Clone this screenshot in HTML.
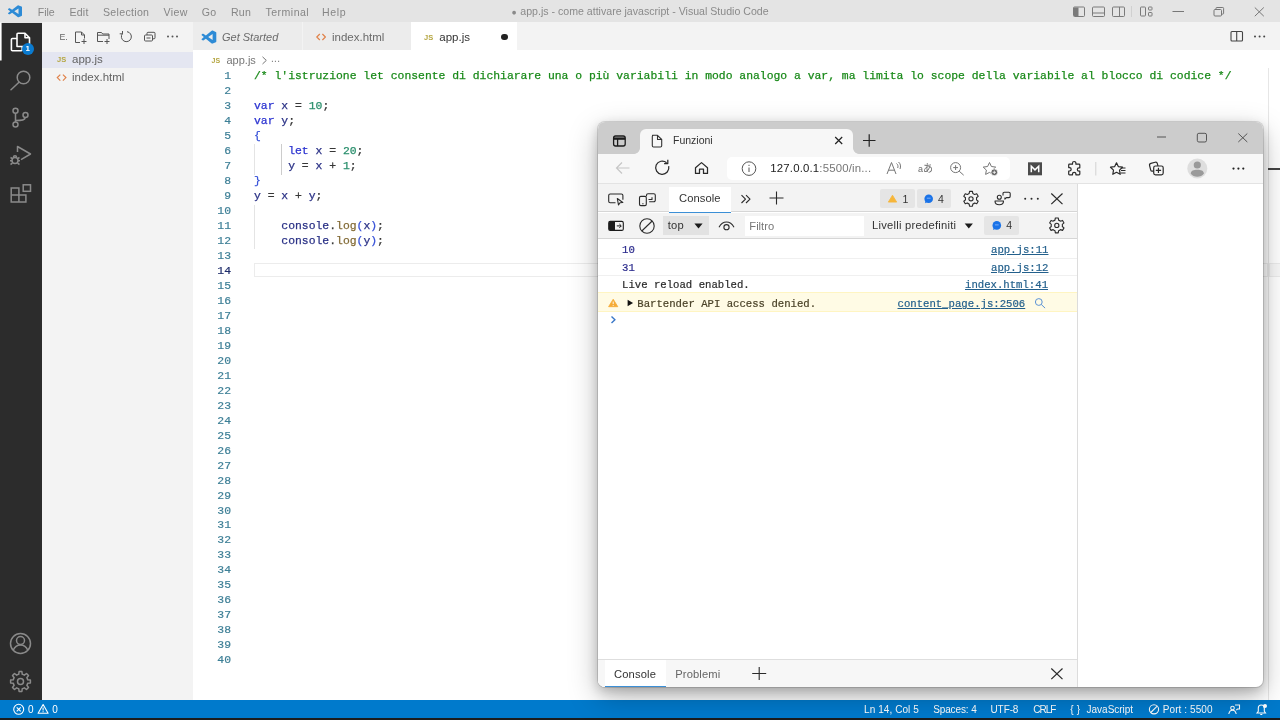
<!DOCTYPE html>
<html lang="it">
<head>
<meta charset="utf-8">
<title>app.js - come attivare javascript - Visual Studio Code</title>
<style>
*{box-sizing:border-box;margin:0;padding:0}
html,body{width:1280px;height:720px;overflow:hidden;background:#fff;font-family:"Liberation Sans",sans-serif;}
.abs,.t{position:absolute;white-space:pre;}
.t{line-height:1;}
svg{position:absolute;overflow:visible}
/* VS Code */
#titlebar{left:0;top:0;width:1280px;height:22.5px;background:#e4e4e4;}
#activity{left:0;top:22.5px;width:42px;height:677.5px;background:#2c2c2c;}
#sidebar{left:42px;top:22px;width:151px;height:678px;background:#f3f3f3;}
#tabs{left:193px;top:22px;width:1087px;height:28px;background:#f3f3f3;}
#editor{left:193px;top:50px;width:1087px;height:650px;background:#fff;}
#status{left:0;top:700px;width:1280px;height:17.500px;background:#007acc;}
#taskbar{left:0;top:717.500px;width:1280px;height:2.500px;background:#1c1c1c;}
.menu{top:6.5px;font-size:10.6px;color:#868686;}
.ln,.cl{position:absolute;white-space:pre;font-family:"Liberation Mono",monospace;font-size:11.4px;line-height:15px;height:15px;-webkit-text-stroke:0.250px currentColor;}
.ln{left:193px;width:38px;text-align:right;color:#3d7f96;-webkit-text-stroke:0.200px currentColor;}
.cl{left:254px;color:#383838;}
.cm{color:#1a8a1a}.kw{color:#2a32d0}.v{color:#2a3186}.n{color:#2a8f6c}.f{color:#846c38}.b1{color:#3550d8}
.sb{top:704.500px;font-size:10px;color:#fff;}
/* Browser */
#bwin{left:598px;top:122px;width:665px;height:565px;border-radius:7px;background:#fff;box-shadow:0 0 0 1px rgba(0,0,0,.13),0 10px 30px rgba(0,0,0,.26),0 4px 12px rgba(0,0,0,.20);overflow:hidden;}
.lk{color:#23608c;text-decoration:underline;text-underline-offset:1px}
.con{font-family:"Liberation Mono",monospace;font-size:10.650px;-webkit-text-stroke:0.200px currentColor;}
</style>
</head>
<body style="filter:blur(0.45px)">
<!-- ===== VS Code window ===== -->
<div class="abs" id="titlebar"></div>
<div class="abs" id="activity"></div>
<div class="abs" id="sidebar"></div>
<div class="abs" id="tabs"></div>
<div class="abs" id="editor"></div>
<div class="abs" id="status"></div>
<div class="abs" id="taskbar"></div>

<!-- title bar text -->
<span class="t menu" style="left:37.8px;letter-spacing:-0.05px">File</span>
<span class="t menu" style="left:69.5px;letter-spacing:0.2px">Edit</span>
<span class="t menu" style="left:103px;letter-spacing:0.3px">Selection</span>
<span class="t menu" style="left:163.500px;letter-spacing:0.4px">View</span>
<span class="t menu" style="left:201.8px;letter-spacing:0.2px">Go</span>
<span class="t menu" style="left:231px;letter-spacing:0.2px">Run</span>
<span class="t menu" style="left:265.500px;letter-spacing:0.45px">Terminal</span>
<span class="t menu" style="left:322px;letter-spacing:0.6px">Help</span>
<span class="t" id="wtitle" style="left:511.500px;top:6.300px;font-size:10.6px;color:#8a8a8a;"><span style="font-size:8.500px;position:relative;top:-0.600px;letter-spacing:0.700px">●</span> app.js - come attivare javascript - Visual Studio Code</span>

<!-- sidebar -->
<div class="abs" style="left:42px;top:52px;width:151px;height:16px;background:#e4e6f1"></div>
<span class="t" style="left:57px;top:56px;font-size:7.5px;font-weight:bold;color:#b5a642">JS</span>
<span class="t" style="left:72px;top:54.300px;font-size:11.5px;color:#636363">app.js</span>
<span class="t" style="left:72px;top:72px;font-size:11.5px;color:#636363">index.html</span>
<span class="t" style="left:59.500px;top:33px;font-size:8.800px;color:#666">E.</span>

<!-- tabs -->
<div class="abs" style="left:193px;top:22px;width:108.500px;height:28px;background:#ececec"></div>
<div class="abs" style="left:302.500px;top:22px;width:108.500px;height:28px;background:#ececec"></div>
<div class="abs" style="left:411px;top:22px;width:106.300px;height:28px;background:#fff"></div>
<span class="t" style="left:222px;top:32px;font-size:11px;font-style:italic;color:#6a6a6a">Get Started</span>
<span class="t" style="left:332px;top:32px;font-size:11.5px;color:#6a6a6a">index.html</span>
<span class="t" style="left:424px;top:34px;font-size:7.5px;font-weight:bold;color:#b5a642">JS</span>
<span class="t" style="left:439.300px;top:32px;font-size:11.5px;color:#333">app.js</span>
<div class="abs" style="left:501.200px;top:33.500px;width:6.500px;height:6.500px;border-radius:50%;background:#222"></div>

<!-- breadcrumb -->
<span class="t" style="left:211.500px;top:57px;font-size:7px;font-weight:bold;color:#b5a642">JS</span>
<span class="t" style="left:226.500px;top:55px;font-size:11px;color:#777">app.js</span>
<span class="t" style="left:271px;top:54px;font-size:10px;letter-spacing:0.3px;color:#777">...</span>

<!-- current line highlight -->
<div class="abs" style="left:253.500px;top:263.300px;width:1014px;height:13.700px;border:1.500px solid #ececec"></div>
<div class="abs" style="left:1267.500px;top:68px;width:1px;height:632px;background:#e6e6e6"></div>
<div class="abs" style="left:1268.500px;top:263.300px;width:12px;height:13.700px;border:1.500px solid #ececec;border-right:0;background:#f8f8f8"></div>
<div class="abs" style="left:1268px;top:168px;width:12px;height:2px;background:#444"></div>
<!-- indent guides -->
<div class="abs" style="left:253.600px;top:144px;width:1px;height:30.500px;background:#e4e4e4"></div>
<div class="abs" style="left:280.700px;top:144px;width:1px;height:30.500px;background:#cccccc"></div>
<div class="abs" style="left:253.600px;top:205px;width:1px;height:43.500px;background:#e4e4e4"></div>
<!-- code -->
<div class="ln" style="top:69px">1</div><div class="cl" style="top:69px"><span class="cm">/* l'istruzione let consente di dichiarare una o più variabili in modo analogo a var, ma limita lo scope della variabile al blocco di codice */</span></div>
<div class="ln" style="top:84px">2</div><div class="cl" style="top:84px"></div>
<div class="ln" style="top:99px">3</div><div class="cl" style="top:99px"><span class="kw">var</span> <span class="v">x</span> = <span class="n">10</span>;</div>
<div class="ln" style="top:114px">4</div><div class="cl" style="top:114px"><span class="kw">var</span> <span class="v">y</span>;</div>
<div class="ln" style="top:129px">5</div><div class="cl" style="top:129px"><span class="b1">{</span></div>
<div class="ln" style="top:144px">6</div><div class="cl" style="top:144px">     <span class="kw">let</span> <span class="v">x</span> = <span class="n">20</span>;</div>
<div class="ln" style="top:159px">7</div><div class="cl" style="top:159px">     <span class="v">y</span> = <span class="v">x</span> + <span class="n">1</span>;</div>
<div class="ln" style="top:174px">8</div><div class="cl" style="top:174px"><span class="b1">}</span></div>
<div class="ln" style="top:189px">9</div><div class="cl" style="top:189px"><span class="v">y</span> = <span class="v">x</span> + <span class="v">y</span>;</div>
<div class="ln" style="top:204px">10</div><div class="cl" style="top:204px"></div>
<div class="ln" style="top:219px">11</div><div class="cl" style="top:219px">    <span class="v">console</span>.<span class="f">log</span><span class="b1">(</span><span class="v">x</span><span class="b1">)</span>;</div>
<div class="ln" style="top:234px">12</div><div class="cl" style="top:234px">    <span class="v">console</span>.<span class="f">log</span><span class="b1">(</span><span class="v">y</span><span class="b1">)</span>;</div>
<div class="ln" style="top:249px">13</div><div class="cl" style="top:249px"></div>
<div class="ln" style="top:264px;color:#1f2d6b">14</div><div class="cl" style="top:264px"></div>
<div class="ln" style="top:279px">15</div><div class="cl" style="top:279px"></div>
<div class="ln" style="top:294px">16</div><div class="cl" style="top:294px"></div>
<div class="ln" style="top:309px">17</div><div class="cl" style="top:309px"></div>
<div class="ln" style="top:324px">18</div><div class="cl" style="top:324px"></div>
<div class="ln" style="top:339px">19</div><div class="cl" style="top:339px"></div>
<div class="ln" style="top:354px">20</div><div class="cl" style="top:354px"></div>
<div class="ln" style="top:369px">21</div><div class="cl" style="top:369px"></div>
<div class="ln" style="top:384px">22</div><div class="cl" style="top:384px"></div>
<div class="ln" style="top:399px">23</div><div class="cl" style="top:399px"></div>
<div class="ln" style="top:414px">24</div><div class="cl" style="top:414px"></div>
<div class="ln" style="top:429px">25</div><div class="cl" style="top:429px"></div>
<div class="ln" style="top:444px">26</div><div class="cl" style="top:444px"></div>
<div class="ln" style="top:459px">27</div><div class="cl" style="top:459px"></div>
<div class="ln" style="top:474px">28</div><div class="cl" style="top:474px"></div>
<div class="ln" style="top:489px">29</div><div class="cl" style="top:489px"></div>
<div class="ln" style="top:504px">30</div><div class="cl" style="top:504px"></div>
<div class="ln" style="top:518px">31</div><div class="cl" style="top:518px"></div>
<div class="ln" style="top:533px">32</div><div class="cl" style="top:533px"></div>
<div class="ln" style="top:548px">33</div><div class="cl" style="top:548px"></div>
<div class="ln" style="top:563px">34</div><div class="cl" style="top:563px"></div>
<div class="ln" style="top:578px">35</div><div class="cl" style="top:578px"></div>
<div class="ln" style="top:593px">36</div><div class="cl" style="top:593px"></div>
<div class="ln" style="top:608px">37</div><div class="cl" style="top:608px"></div>
<div class="ln" style="top:623px">38</div><div class="cl" style="top:623px"></div>
<div class="ln" style="top:638px">39</div><div class="cl" style="top:638px"></div>
<div class="ln" style="top:653px">40</div><div class="cl" style="top:653px"></div>
<!-- ===== VS Code icons ===== -->
<svg width="1280" height="720" style="left:0;top:0" viewBox="0 0 1280 720" fill="none">
<!-- logo in title bar -->
<path d="M70.9119 99.3171C72.4869 99.9307 74.2828 99.8914 75.8725 99.1264L96.4608 89.2197C98.6242 88.1787 100 85.9892 100 83.5872V16.4133C100 14.0113 98.6243 11.8218 96.4609 10.7808L75.8725 0.873756C73.7862 -0.130129 71.3446 0.11576 69.5135 1.44695C69.252 1.63711 69.0028 1.84943 68.769 2.08341L29.3551 38.0415L12.1872 25.0096C10.589 23.7965 8.35363 23.8959 6.86933 25.2461L1.36303 30.2549C-0.452552 31.9064 -0.454633 34.7627 1.35853 36.417L16.2471 50.0001L1.35853 63.5832C-0.454633 65.2374 -0.452552 68.0938 1.36303 69.7453L6.86933 74.7541C8.35363 76.1043 10.589 76.2037 12.1872 74.9905L29.3551 61.9587L68.769 97.9167C69.3925 98.5406 70.1246 99.0104 70.9119 99.3171ZM75.0152 27.2989L45.1091 50.0001L75.0152 72.7012V27.2989Z" transform="translate(8,5.3) scale(0.14,0.12)" fill="#2d8bd6" fill-rule="evenodd"/>
<!-- logo in Get Started tab -->
<path d="M70.9119 99.3171C72.4869 99.9307 74.2828 99.8914 75.8725 99.1264L96.4608 89.2197C98.6242 88.1787 100 85.9892 100 83.5872V16.4133C100 14.0113 98.6243 11.8218 96.4609 10.7808L75.8725 0.873756C73.7862 -0.130129 71.3446 0.11576 69.5135 1.44695C69.252 1.63711 69.0028 1.84943 68.769 2.08341L29.3551 38.0415L12.1872 25.0096C10.589 23.7965 8.35363 23.8959 6.86933 25.2461L1.36303 30.2549C-0.452552 31.9064 -0.454633 34.7627 1.35853 36.417L16.2471 50.0001L1.35853 63.5832C-0.454633 65.2374 -0.452552 68.0938 1.36303 69.7453L6.86933 74.7541C8.35363 76.1043 10.589 76.2037 12.1872 74.9905L29.3551 61.9587L68.769 97.9167C69.3925 98.5406 70.1246 99.0104 70.9119 99.3171ZM75.0152 27.2989L45.1091 50.0001L75.0152 72.7012V27.2989Z" transform="translate(201.500,30.500) scale(0.148,0.132)" fill="#2d8bd6" fill-rule="evenodd"/>

<!-- title bar layout controls -->
<g stroke="#7a7a7a" stroke-width="1">
 <rect x="1073.5" y="7" width="11" height="9.5" rx="1"/>
 <rect x="1074" y="7.5" width="4.5" height="8.5" fill="#7a7a7a" stroke="none"/>
 <rect x="1092.5" y="7" width="12" height="9.5" rx="1"/>
 <path d="M1092.5 13h12"/>
 <rect x="1112.5" y="7" width="12" height="9.5" rx="1"/>
 <path d="M1119.5 7v9.5"/>
 <rect x="1140.5" y="7" width="5" height="9" rx="0.8"/>
 <rect x="1148.5" y="7" width="3.5" height="3" rx="0.6"/>
 <rect x="1148.5" y="12.5" width="3.5" height="3.5" rx="0.6"/>
</g>
<path d="M1131.5 6v11" stroke="#d0d0d0" stroke-width="1"/>
<g stroke="#777" stroke-width="1">
 <path d="M1172.5 11.5h11.5"/>
 <rect x="1214" y="9.5" width="7.5" height="6.5" rx="1"/>
 <path d="M1216 9.5v-1.2a.8.8 0 0 1 .8-.8h6a.8.8 0 0 1 .8.8v5a.8.8 0 0 1-.8.8h-1.2"/>
 <path d="M1254.8 7.5l9 8.7M1263.8 7.5l-9 8.7"/>
</g>
<!-- editor actions -->
<g stroke="#444" stroke-width="1.1">
 <rect x="1231" y="31.5" width="11.5" height="9.5" rx="1"/>
 <path d="M1236.7 31.5v9.5"/>
</g>
<g fill="#444"><circle cx="1255" cy="36.5" r="1"/><circle cx="1259.6" cy="36.5" r="1"/><circle cx="1264.2" cy="36.5" r="1"/></g>

<!-- activity bar -->
<rect x="0" y="22.5" width="1.6" height="38" fill="#fff"/>
<g stroke="#fff" stroke-width="1.6" stroke-linejoin="round">
 <path d="M17 46.5V34.3a1 1 0 0 1 1-1h7l4.5 4.5v7.7a1 1 0 0 1-1 1z"/>
 <path d="M25 33.3v4.5h4.5"/>
 <path d="M17 38.5h-4.6a1 1 0 0 0-1 1v10.2a1 1 0 0 0 1 1h8.8a1 1 0 0 0 1-1v-3.2"/>
</g>
<circle cx="28" cy="49" r="6" fill="#0a7bd0"/>
<g stroke="#8a8a8a" stroke-width="1.5">
 <circle cx="23.5" cy="77.5" r="6.3"/>
 <path d="M19 82.200000000000003l-8 7.5" stroke-linecap="round"/>
 <!-- source control -->
 <circle cx="15.5" cy="110.8" r="2.5"/><circle cx="25.5" cy="115" r="2.5"/><circle cx="15.5" cy="124.5" r="2.5"/>
 <path d="M15.5 113.3v8.7M25.2 117.5c0 2.5-3 3-9.7 3"/>
 <!-- run & debug -->
 <path d="M17.5 152v-5.5l13 7.5-9.5 5.600000000000001" stroke-linejoin="round"/>
 <circle cx="15" cy="160.5" r="3" />
 <path d="M10.5 157.5l2 1.2M19.5 157.5l-2 1.2M10 160.8h2M18 160.8h2M10.5 164.5l2-1.3M19.5 164.5l-2-1.3M13.5 157.2c0-2 3-2 3 0"/>
 <!-- extensions -->
 <path d="M11.2 188h7.7v7h7v7h-14.7zM18.900000000000002 195v7M11.2 195h7.7"/>
 <rect x="23.200000000000003" y="184.8" width="7.3" height="6.5"/>
 <!-- account -->
 <circle cx="20.5" cy="643.5" r="10"/>
 <circle cx="20.5" cy="640.5" r="4"/>
 <path d="M13.2 650.3c1.5-3.7 4-5.300000000000001 7.3-5.300000000000001s5.800000000000001 1.6 7.3 5.300000000000001"/>
</g>
<!-- gear -->
<path d="M22.29 674.32L21.89 671.60L19.11 671.60L18.71 674.32A7.4 7.4 0 0 0 16.69 675.16L14.48 673.51L12.51 675.48L14.16 677.69A7.4 7.4 0 0 0 13.32 679.71L10.60 680.11L10.60 682.89L13.32 683.29A7.4 7.4 0 0 0 14.16 685.31L12.51 687.52L14.48 689.49L16.69 687.84A7.4 7.4 0 0 0 18.71 688.68L19.11 691.40L21.89 691.40L22.29 688.68A7.4 7.4 0 0 0 24.31 687.84L26.52 689.49L28.49 687.52L26.84 685.31A7.4 7.4 0 0 0 27.68 683.29L30.40 682.89L30.40 680.11L27.68 679.71A7.4 7.4 0 0 0 26.84 677.69L28.49 675.48L26.52 673.51L24.31 675.16A7.4 7.4 0 0 0 22.29 674.32Z" stroke="#8a8a8a" stroke-width="1.5" stroke-linejoin="round"/>
<circle cx="20.500" cy="681.500" r="3" stroke="#8a8a8a" stroke-width="1.5"/>

<path d="M262.500 56.800l3.800 3.600-3.800 3.600" stroke="#777" stroke-width="1"/>
<path d="M60.300 74.600l-3 3 3 3M62.900 74.600l3 3-3 3M319.800 34l-3 3 3 3M322.400 34l3 3-3 3" stroke="#e0824a" stroke-width="1.200"/>
<!-- sidebar toolbar -->
<g stroke="#555" stroke-width="1">
 <path d="M80 42.5h-4.5v-10.5h6l3 3v3.5M81.5 32v3h3M81.5 41.5h5M84 39v5"/>
 <path d="M103 41.5h-5.5v-9h4l1.2 1.5h6.3v5M97.5 35.200000000000003h11.5M104.5 41.5h5M107 39v5"/>
 <path d="M122.5 33.5a5 5 0 1 0 4.5-1.8M122.5 31v2.8h-2.8"/>
 <rect x="144.5" y="35" width="8" height="6" rx="1"/>
 <path d="M147 35v-1.700000000000003a1 1 0 0 1 1-1h6a1 1 0 0 1 1 1v4.5a1 1 0 0 1-1 1h-1.5M146.5 38h4"/>
</g>
<g fill="#555"><circle cx="168" cy="36.5" r="1"/><circle cx="172.5" cy="36.5" r="1"/><circle cx="177" cy="36.5" r="1"/></g>

<!-- status bar icons -->
<g stroke="#fff" stroke-width="1.1">
 <circle cx="18.700" cy="709.300" r="5"/>
 <path d="M16.700 707.300l4 4M20.700 707.300l-4 4"/>
 <path d="M43.100 704.500l5 8.700h-10z" stroke-linejoin="round"/>
 <path d="M43.100 707.500v3M43.100 711.300v.9"/>
 <circle cx="1154" cy="709.300" r="4.600"/>
 <path d="M1150.800 712.500l6.400-6.400"/>
 <!-- feedback -->
 <circle cx="1232.500" cy="708" r="1.800"/>
 <path d="M1228.800 714c.5-3 2-3.800 3.700-3.800s3.200.8 3.700 3.800M1235 705h4.500v4h-2l-1.200 1.200"/>
 <!-- bell -->
 <path d="M1257 713h8.500l-1.200-1.800v-3.200a3 3 0 0 0-6 0v3.200zM1260.300 714.500h2"/>
</g>
<circle cx="1265" cy="706" r="2" fill="#fff"/>
</svg>
<span class="t" style="left:25.5px;top:44.5px;font-size:8px;font-weight:bold;color:#fff">1</span>

<!-- status bar -->
<span class="t sb" style="left:28px">0</span>
<span class="t sb" style="left:52.3px">0</span>
<span class="t sb" style="left:864px;letter-spacing:0.080px">Ln 14, Col 5</span>
<span class="t sb" style="left:933.200px;letter-spacing:-0.120px">Spaces: 4</span>
<span class="t sb" style="left:990.5px;letter-spacing:-0.1px">UTF-8</span>
<span class="t sb" style="left:1033.2px;letter-spacing:-1px">CRLF</span>
<span class="t sb" style="left:1070.3px;letter-spacing:0.2px">{ }</span>
<span class="t sb" style="left:1086.600px;letter-spacing:-0.020px">JavaScript</span>
<span class="t sb" style="left:1162.800px;letter-spacing:0.080px">Port : 5500</span>

<!-- ===== Browser window ===== -->
<div class="abs" id="bwin">
  <div class="abs" style="left:0;top:0;width:665px;height:32px;background:#cccccc"></div>
  <div class="abs" style="left:42px;top:7px;width:213px;height:25px;background:#f7f7f7;border-radius:6px 6px 0 0"></div>
  <div class="abs" style="left:36px;top:26px;width:6px;height:6px;background:radial-gradient(circle at 0 0,#cccccc 5.500px,#f7f7f7 6.200px)"></div>
  <div class="abs" style="left:255px;top:26px;width:6px;height:6px;background:radial-gradient(circle at 100% 0,#cccccc 5.500px,#f7f7f7 6.200px)"></div>
  <div class="abs" style="left:0;top:31.600px;width:665px;height:30.400px;background:#f7f7f7;border-bottom:1px solid #e3e3e3"></div>
  <div class="abs" style="left:128.500px;top:35.300px;width:283px;height:22.800px;background:#fff;border-radius:5px"></div>
  <!-- devtools -->
  <div class="abs" style="left:0;top:62px;width:480px;height:503px;background:#fff;border-right:1px solid #e2e2e2"></div>
  <div class="abs" style="left:0;top:62px;width:480px;height:28px;background:#f3f3f3;border-bottom:1px solid #d6d6d6"></div>
  <div class="abs" style="left:71px;top:64.500px;width:61.500px;height:26.500px;background:#fff;border-bottom:1.500px solid #3b8fd6"></div>
  <div class="abs" style="left:0;top:91px;width:480px;height:26px;background:#f3f3f3;border-bottom:1px solid #d6d6d6"></div>
  <div class="abs" style="left:146.700px;top:94px;width:119.500px;height:20px;background:#fff"></div>
  <div class="abs" style="left:65px;top:93.600px;width:45.500px;height:19.200px;background:#e2e2e2"></div>
  <div class="abs" style="left:282px;top:67.4px;width:34.5px;height:18.8px;border-radius:2px;background:#e5e5e5"></div>
  <div class="abs" style="left:318.5px;top:67.4px;width:34.7px;height:18.8px;border-radius:2px;background:#e5e5e5"></div>
  <div class="abs" style="left:386px;top:94px;width:35.3px;height:18.8px;border-radius:2px;background:#e5e5e5"></div>
  <!-- console rows -->
  <div class="abs" style="left:0;top:135.700px;width:480px;height:1px;background:#f0f0f0"></div>
  <div class="abs" style="left:0;top:153.200px;width:480px;height:1px;background:#f0f0f0"></div>
  <div class="abs" style="left:0;top:170.400px;width:480px;height:19.800px;background:#fffbe5;border-top:1px solid #fff5c2;border-bottom:1px solid #fff5c2"></div>
  <!-- drawer -->
  <div class="abs" style="left:0;top:537px;width:480px;height:28px;background:#f7f7f7;border-top:1px solid #dedede"></div>
  <div class="abs" style="left:7px;top:538px;width:61px;height:27px;background:#fff;border-bottom:1.500px solid #3b8fd6"></div>
  <div class="abs" style="left:479px;top:62px;width:1px;height:503px;background:#dcdcdc"></div>
</div>
<span class="t" style="left:673px;top:135px;font-size:10.5px;color:#333">Funzioni</span>
<span class="t" style="left:770.300px;top:163.200px;font-size:11.400px;letter-spacing:0.170px;color:#222">127.0.0.1<span style="color:#777">:5500/in...</span></span>
<span class="t" style="left:918px;top:163.500px;font-size:9px;color:#6a6a6a;font-family:'Liberation Sans','Noto Sans CJK JP',sans-serif">a<span style="font-size:10px">あ</span></span>
<span class="t" style="left:679px;top:193.200px;font-size:11.2px;letter-spacing:0.080px;color:#333">Console</span>
<span class="t" style="left:667.700px;top:220px;font-size:11.2px;letter-spacing:0.300px;color:#333">top</span>
<span class="t" style="left:749.300px;top:220.500px;font-size:11.2px;color:#777">Filtro</span>
<span class="t" style="left:872px;top:220px;font-size:11.2px;letter-spacing:0.250px;color:#333">Livelli predefiniti</span>
<span class="t" style="left:902.500px;top:193.500px;font-size:10.5px;color:#333">1</span>
<span class="t" style="left:938px;top:193.500px;font-size:10.5px;color:#333">4</span>
<span class="t" style="left:1006.300px;top:220.300px;font-size:10.5px;color:#333">4</span>
<span class="t con" style="left:622px;top:244.500px;color:#2a2a8c">10</span>
<span class="t con" style="left:622px;top:262.500px;color:#2a2a8c">31</span>
<span class="t con" style="left:622px;top:279.500px;color:#2a2a2a">Live reload enabled.</span>
<span class="t con" style="left:637.300px;top:299px;color:#4a4228">Bartender API access denied.</span>
<span class="t con lk" style="left:991px;top:244.500px">app.js:11</span>
<span class="t con lk" style="left:991px;top:262.500px">app.js:12</span>
<span class="t con lk" style="left:965px;top:279.500px">index.html:41</span>
<span class="t con lk" style="left:897.500px;top:299px">content_page.js:2506</span>
<span class="t" style="left:614px;top:669px;font-size:11.2px;letter-spacing:0.150px;color:#333">Console</span>
<span class="t" style="left:675.300px;top:669px;font-size:11.2px;letter-spacing:0.100px;color:#666">Problemi</span>
<!-- ===== Browser icons ===== -->
<svg width="1280" height="720" style="left:0;top:0" viewBox="0 0 1280 720" fill="none">
<!-- tab strip -->
<g stroke="#1b1b1b" stroke-width="1.3">
 <rect x="613.6" y="136" width="11.6" height="10" rx="2"/>
 <path d="M613.6 138.6h11.6" stroke-width="2.4"/>
 <path d="M617.6 138.6v7.4"/>
</g>
<g stroke="#333" stroke-width="1.1" stroke-linejoin="round">
 <path d="M652.5 135.3h5l4.2 4.2v6.3a1.2 1.2 0 0 1-1.2 1.2h-7a1.2 1.2 0 0 1-1.2-1.2v-9.300000000000001a1.2 1.2 0 0 1 1.2-1.2zM657.5 135.3v4.2h4.2"/>
</g>
<path d="M835.2 137l7 7M842.2 137l-7 7" stroke="#222" stroke-width="1.2"/>
<path d="M863 140.5h12.5M869.2 134.2v12.5" stroke="#222" stroke-width="1.2"/>
<g stroke="#555" stroke-width="1">
 <path d="M1157 137h9"/>
 <rect x="1197.3" y="133.3" width="9.2" height="8.7" rx="1.6"/>
 <path d="M1238.3 133.5l9 8.5M1247.3 133.5l-9 8.5"/>
</g>
<!-- nav buttons -->
<path d="M629.5 168h-13M622 162.5l-5.5 5.5 5.5 5.5" stroke="#c6c6c6" stroke-width="1.2"/>
<g stroke="#2a2a2a" stroke-width="1.25">
 <path d="M668.7 166.2a6.600000000000023 6.600000000000023 0 1 1-2.1-3.5"/>
 <path d="M667.8 159.8v3.7h-3.7" stroke-linejoin="round"/>
 <path d="M695.5 167.8l6-5.2 6 5.2v5.6h-4v-4.2h-4v4.2h-4z" stroke-linejoin="round"/>
</g>
<g stroke="#555" stroke-width="1">
 <circle cx="749" cy="168.6" r="6.8"/>
 <path d="M749 167.5v4.5M749 164.8v1.2"/>
</g>
<!-- address bar icons -->
<g stroke="#767676" stroke-width="1">
 <path d="M887 174l4.5-11.5 4.5 11.5M888.6 170.2h6"/>
 <path d="M896.5 163.5c1.5 1 1.8 3 1.2 4.5M898.5 162c2 1.5 2.6 4.5 1.5 7"/>
 <circle cx="955.6" cy="167.6" r="5"/>
 <path d="M959.2 171.2l4.5 4M953.2 167.6h4.800000000000068M955.6 165.2v4.800000000000068"/>
 <path d="M989.5 162.5l1.9 4 4.300000000000068.6-3.1 3 .7 4.300000000000068-3.8-2-3.9 2 .8-4.300000000000068-3.2-3 4.400000000000091-.6z" stroke-linejoin="round"/>
</g>
<circle cx="994.3" cy="172.3" r="3.4" fill="#666" stroke="#fff" stroke-width="0.8"/>
<path d="M992.6 172.3h3.4M994.3 170.6v3.4" stroke="#fff" stroke-width="0.8"/>
<rect x="1028" y="162.3" width="14" height="13" fill="#4b4b4b"/>
<path d="M1031.300 172.200v-6l3.700 3.700 3.700-3.700v6" stroke="#fff" stroke-width="1.500" />
<g stroke="#2a2a2a" stroke-width="1.2" stroke-linejoin="round">
 <path d="M1072.5 163.2a1.7 1.7 0 0 1 3.4 0v1h3.1a.8.8 0 0 1 .8.8v2.8h-.8a1.7 1.7 0 0 0 0 3.4h.8v2.8a.8.8 0 0 1-.8.8h-3.1v-.8a1.7 1.7 0 0 0-3.4 0v.8h-3a.8.8 0 0 1-.8-.8v-3h.8a1.7 1.7 0 0 0 0-3.4h-.8v-2.600000000000023a.8.8 0 0 1 .8-.8h3z"/>
 <path d="M1116.500 162.800l1.800 3.800 4.200.6-3 2.900.7 4.200-3.700-2-3.700 2 .7-4.200-3-2.900 4.200-.6z"/>
 <path d="M1121 170.500h4.500M1120.500 173h5M1121.500 168h4"/>
 <rect x="1150" y="162.700" width="8" height="8" rx="1.800" transform="rotate(-14 1154 166.700)"/>
 <rect x="1153.700" y="166" width="9.500" height="8.800" rx="1.800" fill="#f7f7f7"/>
 <path d="M1155.800 170.400h5.300M1158.450 167.800v5.300"/>
</g>
<path d="M1095.800 162v13.500" stroke="#d2d2d2" stroke-width="1"/>
<circle cx="1197.300" cy="168.500" r="10" fill="#dedede"/>
<circle cx="1197.300" cy="165" r="3.600" fill="#9a9a9a"/>
<path d="M1190.800 173.500c0-2.800 3-3.800 6.500-3.800s6.500 1 6.500 3.800c-1.200 2.200-4 3.200-6.500 3.200s-5.300-1-6.500-3.200z" fill="#9a9a9a"/>
<g fill="#222"><circle cx="1233.500" cy="168.600" r="1.100"/><circle cx="1238.400" cy="168.600" r="1.100"/><circle cx="1243.300" cy="168.600" r="1.100"/></g>

<!-- devtools toolbar 1 -->
<g stroke="#2a2a2a" stroke-width="1.100" stroke-linejoin="round">
 <path d="M615.500 202.700h-5.300a1.500 1.500 0 0 1-1.500-1.500v-5.700a1.500 1.500 0 0 1 1.500-1.500h11.200a1.500 1.500 0 0 1 1.500 1.500v4.200"/>
 <path d="M617.300 198.500l1.200 6.500 1.500-2.300 2.800-.2z"/>
 <path d="M646.500 196.200v-1a1.500 1.500 0 0 1 1.500-1.500h5.800a1.500 1.500 0 0 1 1.500 1.500v5a1.500 1.500 0 0 1-1.500 1.500h-4.600"/>
 <rect x="639.500" y="196.400" width="6.800" height="9.200" rx="1.300"/>
 <path d="M642.300 203.700h1.200M648.500 199.500h3.500v-2.200"/>
 <path d="M741.500 195.200l4 3.900-4 3.900M746 195.200l4 3.900-4 3.900"/>
 <path d="M769.500 198h14M776.500 191.500v13"/>
</g>
<!-- badges -->
<path d="M892.500 195.200l4.200 6.900h-8.400z" fill="#f6b63a" stroke="#f6b63a" stroke-width="0.800" stroke-linejoin="round"/>
<circle cx="928.700" cy="198.700" r="4.300" fill="#1a73e8"/>
<path d="M925 203.300l.6-3 2 1.800z" fill="#1a73e8"/>
<path d="M926.800 198.200h3.800" stroke="#8ab4f8" stroke-width="0.900"/>
<!-- gear 1 -->
<path d="M972.82 193.51L972.45 191.34L969.55 191.34L969.18 193.51A5.6 5.6 0 0 0 967.33 194.57L965.26 193.81L963.81 196.33L965.50 197.73A5.6 5.6 0 0 0 965.50 199.87L963.81 201.27L965.26 203.79L967.33 203.03A5.6 5.6 0 0 0 969.18 204.09L969.55 206.26L972.45 206.26L972.82 204.09A5.6 5.6 0 0 0 974.67 203.03L976.74 203.79L978.19 201.27L976.50 199.87A5.6 5.6 0 0 0 976.50 197.73L978.19 196.33L976.74 193.81L974.67 194.57A5.6 5.6 0 0 0 972.82 193.51Z" stroke="#2a2a2a" stroke-width="1.1" stroke-linejoin="round"/>
<circle cx="971" cy="198.800" r="2.100" stroke="#2a2a2a" stroke-width="1.1"/>
<g stroke="#2a2a2a" stroke-width="1.100" stroke-linejoin="round">
 <circle cx="999.300" cy="197.200" r="2"/>
 <path d="M995 201h8.500c0 2.500-2 3.800-4.250 3.800s-4.250-1.300-4.250-3.800z"/>
 <path d="M1003 195.500v-2a1.300 1.300 0 0 1 1.300-1.300h4.600a1.300 1.300 0 0 1 1.300 1.300v2.800a1.300 1.300 0 0 1-1.300 1.300h-2.500l-1.500 1.500v-1.500"/>
</g>
<g fill="#2a2a2a"><circle cx="1025.200" cy="198.700" r="1"/><circle cx="1031.500" cy="198.700" r="1"/><circle cx="1037.800" cy="198.700" r="1"/></g>
<path d="M1051.300 193.500l11.200 10.600M1062.500 193.500l-11.200 10.600" stroke="#2a2a2a" stroke-width="1.200"/>

<!-- devtools toolbar 2 -->
<rect x="608.700" y="221.400" width="14.600" height="9" rx="1.500" stroke="#1b1b1b" stroke-width="1.100"/>
<path d="M609 222.500a1 1 0 0 1 1-1h5v8.800h-5a1 1 0 0 1-1-1z" fill="#1b1b1b"/>
<path d="M616.800 225.900h4.200M619.400 224l1.900 1.900-1.900 1.900" stroke="#1b1b1b" stroke-width="1"/>
<g stroke="#2a2a2a" stroke-width="1.100">
 <circle cx="647" cy="226" r="7.200"/>
 <path d="M641.800 231l10.400-10"/>
 <path d="M719 227.200c2-3.600 4.800-5.200 7.500-5.200s5.500 1.600 7.500 5.200"/>
 <circle cx="726.500" cy="227.200" r="2.600"/>
</g>
<path d="M694.400 223.500h8.200l-4.100 5z" fill="#1b1b1b"/>
<path d="M964.700 223.500h8.200l-4.100 5z" fill="#1b1b1b"/>
<circle cx="996.800" cy="225.400" r="4.300" fill="#1a73e8"/>
<path d="M993.100 230l.6-3 2 1.800z" fill="#1a73e8"/>
<path d="M994.900 224.900h3.800" stroke="#8ab4f8" stroke-width="0.900"/>
<path d="M1058.62 220.11L1058.25 217.94L1055.35 217.94L1054.98 220.11A5.6 5.6 0 0 0 1053.13 221.17L1051.06 220.41L1049.61 222.93L1051.30 224.33A5.6 5.6 0 0 0 1051.30 226.47L1049.61 227.87L1051.06 230.39L1053.13 229.63A5.6 5.6 0 0 0 1054.98 230.69L1055.35 232.86L1058.25 232.86L1058.62 230.69A5.6 5.6 0 0 0 1060.47 229.63L1062.54 230.39L1063.99 227.87L1062.30 226.47A5.6 5.6 0 0 0 1062.30 224.33L1063.99 222.93L1062.54 220.41L1060.47 221.17A5.6 5.6 0 0 0 1058.62 220.11Z" stroke="#2a2a2a" stroke-width="1.1" stroke-linejoin="round"/>
<circle cx="1056.800" cy="225.400" r="2.100" stroke="#2a2a2a" stroke-width="1.1"/>

<!-- console icons -->
<path d="M613.200 299.200l4.600 7.500h-9.200z" fill="#f5ab35" stroke="#f5ab35" stroke-width="0.800" stroke-linejoin="round"/>
<path d="M613.200 301.500v2.600M613.200 305v.9" stroke="#fff" stroke-width="0.900"/>
<path d="M627.600 299.700l5.500 3.300-5.500 3.300z" fill="#111"/>
<path d="M611.500 316.500l3.400 3.300-3.400 3.300" stroke="#3a78c8" stroke-width="1.400"/>
<g stroke="#5b93d6" stroke-width="1"><circle cx="1038.800" cy="302" r="3.400"/><path d="M1041.300 304.500l3.800 3.600"/></g>

<!-- drawer -->
<path d="M752.200 673.500h14M759.200 667v13" stroke="#2a2a2a" stroke-width="1.100"/>
<path d="M1051.300 668.500l11.200 10.600M1062.500 668.500l-11.200 10.600" stroke="#2a2a2a" stroke-width="1.200"/>
</svg>
</body>
</html>
